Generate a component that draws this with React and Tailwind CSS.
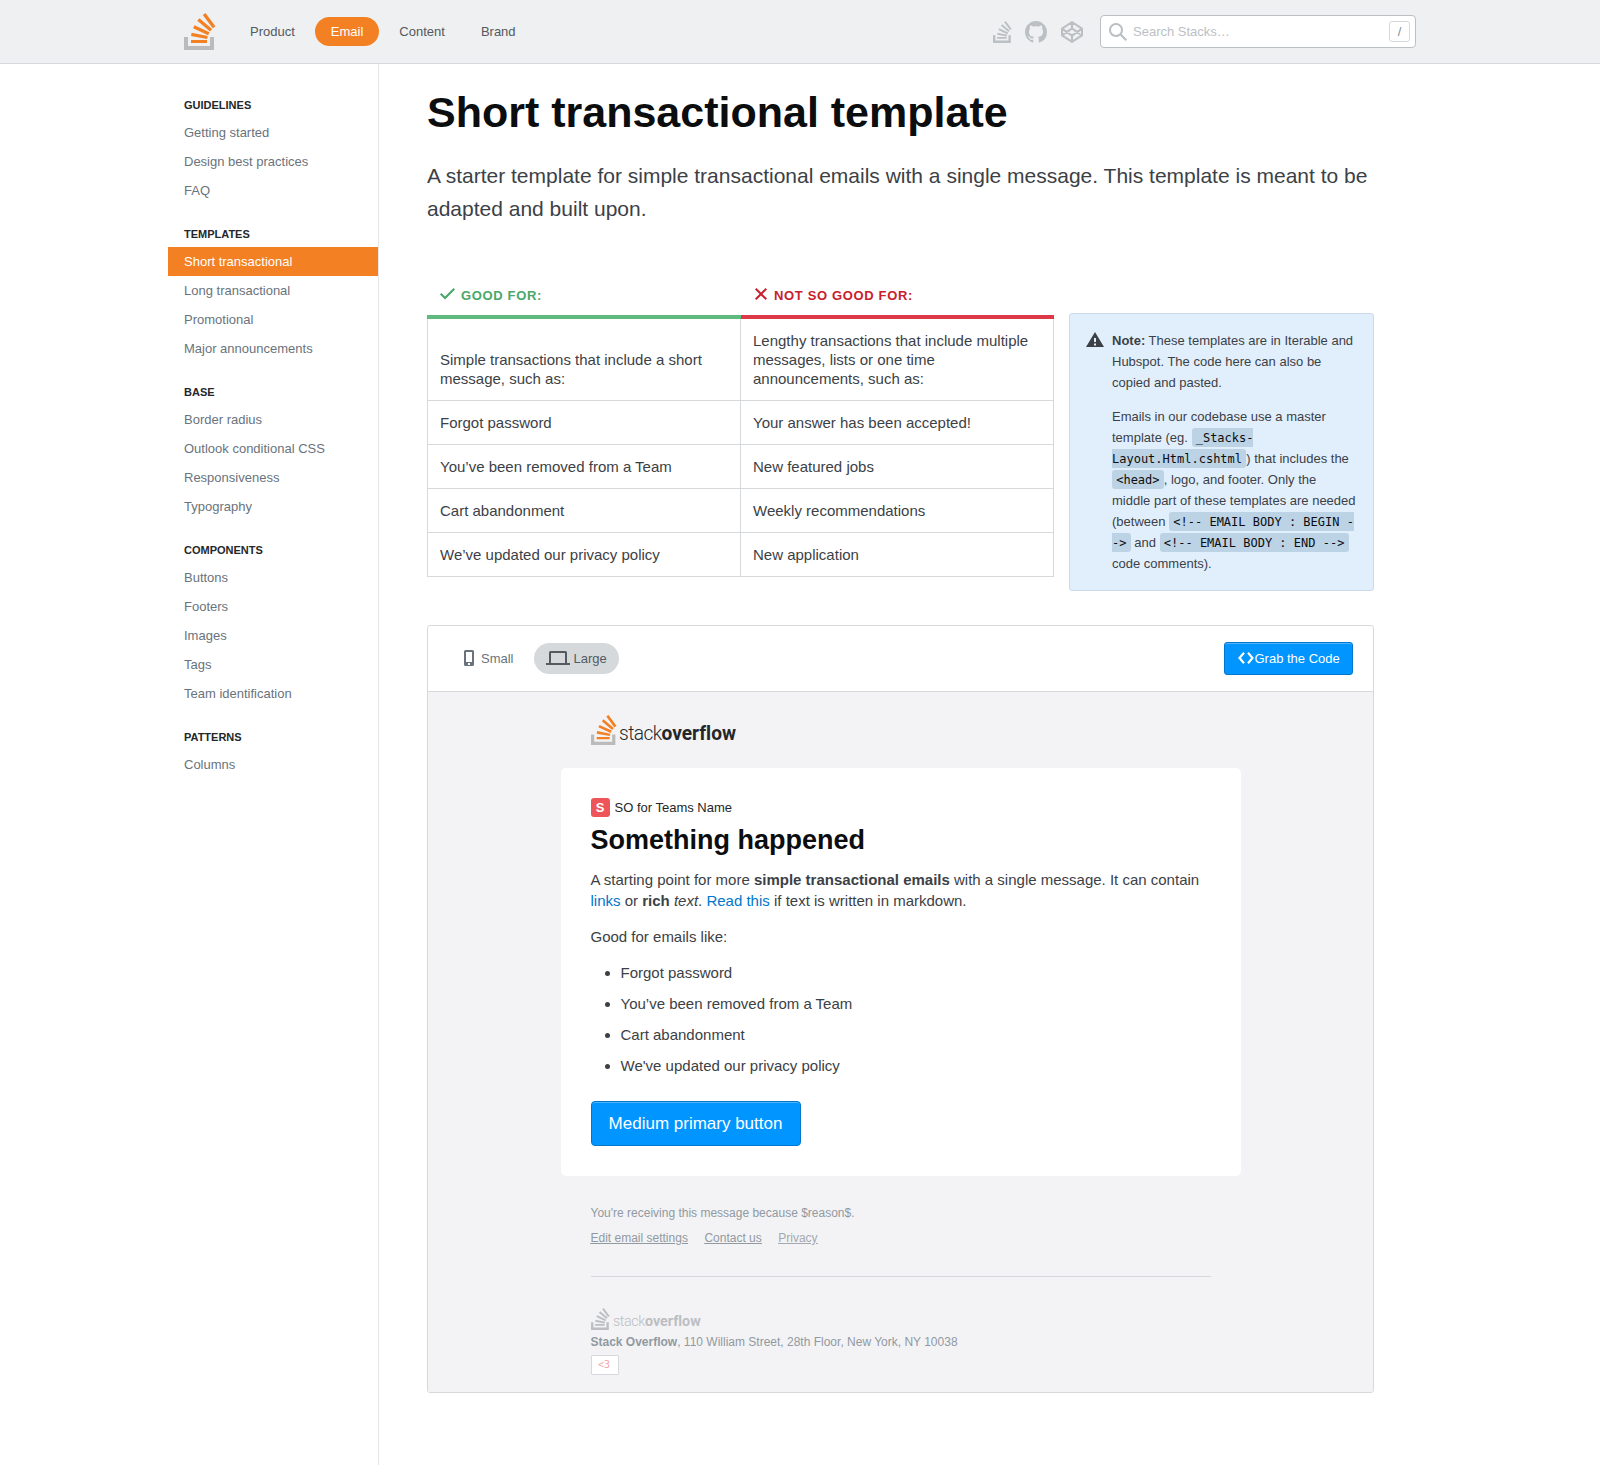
import React from "react";

const BARS =
  "M21.5 0l-2.7 2 9.9 13.3 2.7-2L21.5 0zM26 18.4L13.3 7.8l2.1-2.5 12.7 10.6-2.1 2.5zM9.1 15.2l15 7 1.4-3-15-7-1.4 3zm14 10.79l.68-2.95-16.1-3.35L7 23l16.1 2.99zM23 30H7v-3h16v3z";
const TRAY = "M26 33v-9h4v13H0V24h4v9h22z";

const StackMark = ({ className, bars = "#f48024", tray = "#bcbbbb" }) => (
  <svg className={className} viewBox="0 0 32 37" preserveAspectRatio="none">
    <path fill={tray} d={TRAY} />
    <path fill={bars} d={BARS} />
  </svg>
);

const Wordmark = ({ className, color }) => (
  <svg
    className={className}
    viewBox="0 -4 120 32"
    fill={color}
    fontFamily="Roboto, sans-serif"
    fontSize="20.5"
    style={{ fontVariantLigatures: "none" }}
  >
    <text x="0" y="20.5" textLength="117" lengthAdjust="spacingAndGlyphs">
      <tspan fontWeight="300" letterSpacing="-0.6">stack</tspan>
      <tspan fontWeight="700">overflow</tspan>
    </text>
  </svg>
);

const nav = ["Product", "Email", "Content", "Brand"];

const groups = [
  ["Guidelines", ["Getting started", "Design best practices", "FAQ"]],
  ["Templates", ["Short transactional", "Long transactional", "Promotional", "Major announcements"]],
  ["Base", ["Border radius", "Outlook conditional CSS", "Responsiveness", "Typography"]],
  ["Components", ["Buttons", "Footers", "Images", "Tags", "Team identification"]],
  ["Patterns", ["Columns"]],
];

const rows = [
  ["Forgot password", "Your answer has been accepted!"],
  ["You’ve been removed from a Team", "New featured jobs"],
  ["Cart abandonment", "Weekly recommendations"],
  ["We’ve updated our privacy policy", "New application"],
];

const bullets = ["Forgot password", "You’ve been removed from a Team", "Cart abandonment", "We've updated our privacy policy"];

const Code = ({ children }) => (
  <code className="rounded-[3px] bg-[#bcd3e6] px-[4.2px] py-[2.5px] align-[1px] font-['DejaVu_Sans_Mono',monospace] text-[12px] leading-none text-[#0c0d0e]">
    {children}
  </code>
);

function Header() {
  return (
    <header className="h-16 border-b border-[#d6d9dc] bg-[#eff0f1]">
      <div className="mx-auto flex h-[63px] w-[1264px] items-center px-4">
        <StackMark className="h-[37px] w-8 shrink-0" />
        <nav className="ml-[18px] flex gap-1">
          {nav.map((n) => (
            <a
              key={n}
              className={
                n === "Email"
                  ? "rounded-full bg-[#f48024] px-4 py-1.5 text-[13px] leading-[17px] text-white"
                  : "px-4 py-1.5 text-[13px] leading-[17px] text-[#535a60]"
              }
            >
              {n}
            </a>
          ))}
        </nav>
        <div className="ml-auto flex items-center text-[#bbc0c4]">
          <StackMark className="mr-[13px] h-[22px] w-[19px]" bars="#bbc0c4" tray="#bbc0c4" />
          <svg className="mr-[14px] h-[22px] w-[22px]" viewBox="0 0 16 16" fill="currentColor">
            <path d="M8 0C3.58 0 0 3.58 0 8c0 3.54 2.29 6.53 5.47 7.59.4.07.55-.17.55-.38 0-.19-.01-.82-.01-1.49-2.01.37-2.53-.49-2.69-.94-.09-.23-.48-.94-.82-1.13-.28-.15-.68-.52-.01-.53.63-.01 1.08.58 1.23.82.72 1.21 1.87.87 2.33.66.07-.52.28-.87.51-1.07-1.78-.2-3.64-.89-3.64-3.95 0-.87.31-1.59.82-2.15-.08-.2-.36-1.02.08-2.12 0 0 .67-.21 2.2.82.64-.18 1.32-.27 2-.27s1.36.09 2 .27c1.53-1.04 2.2-.82 2.2-.82.44 1.1.16 1.92.08 2.12.51.56.82 1.27.82 2.15 0 3.07-1.87 3.75-3.65 3.95.29.25.54.73.54 1.48 0 1.07-.01 1.93-.01 2.2 0 .21.15.46.55.38A8.01 8.01 0 0 0 16 8c0-4.42-3.58-8-8-8z" />
          </svg>
          <svg className="mr-[17px] h-[22px] w-[22px]" viewBox="0 0 22 22" fill="none" stroke="currentColor" strokeWidth="2.1" strokeLinejoin="round">
            <path d="M11 1.1L21 7.600v6.800L11 20.900 1 14.400V7.600zM11 1.100v6.200M11 14.700v6.200M1 7.600L11 14.700l10-7.100M1 14.400L11 7.300l10 7.100" />
          </svg>
          <div className="flex h-[33px] w-[316px] items-center rounded-[4px] border border-[#bbc0c4] bg-white pl-2 pr-[5px]">
            <svg className="h-[18px] w-[18px]" viewBox="0 0 18 18" fill="currentColor">
              <path d="M18 16.5l-5.14-5.18h-.35a7 7 0 10-1.19 1.19v.35L16.5 18l1.5-1.5zM12 7A5 5 0 112 7a5 5 0 0110 0z" />
            </svg>
            <span className="ml-1.5 text-[13px] leading-[17px] text-[#bbc0c4]">Search Stacks…</span>
            <span className="ml-auto flex h-[21px] w-[21px] items-center justify-center rounded-[3px] border border-[#d6d9dc] text-[13px] text-[#848d95]">
              /
            </span>
          </div>
        </div>
      </div>
    </header>
  );
}

function Sidebar() {
  return (
    <aside className="w-[211px] shrink-0 border-r border-[#e4e6e8] pt-[12px]">
      {groups.map(([title, items]) => (
        <section key={title}>
          <h2 className="px-4 pb-1.5 pt-[22px] text-[11px] font-bold uppercase leading-[14px] text-[#242729]">{title}</h2>
          {items.map((i) => (
            <a
              key={i}
              className={
                i === "Short transactional"
                  ? "block bg-[#f48024] px-4 py-1.5 text-[13px] leading-[17px] text-white"
                  : "block px-4 py-1.5 text-[13px] leading-[17px] text-[#6a737c]"
              }
            >
              {i}
            </a>
          ))}
        </section>
      ))}
    </aside>
  );
}

function Comparison() {
  return (
    <div className="grid w-[627px] grid-cols-[314px_313px] text-[15px] leading-[19px] text-[#3c4146]">
      <div className="flex h-[52px] items-center border-b-4 border-[#5eba7d] pl-3 pt-[6px] text-[#48a868]">
        <svg className="mr-1 h-[18px] w-[18px]" viewBox="0 0 18 18" fill="currentColor">
          <path d="M16 4.41L14.59 3 6 11.59 2.41 8 1 9.41l5 5z" />
        </svg>
        <span className="pt-[3px] text-[13px] font-bold leading-[17px] tracking-[0.65px]">GOOD FOR:</span>
      </div>
      <div className="flex h-[52px] items-center border-b-4 border-[#dc3848] pl-[11px] pt-[6px] text-[#c9202d]">
        <svg className="mr-1 h-[18px] w-[18px]" viewBox="0 0 18 18" fill="currentColor">
          <path d="M15 4.41L13.59 3 9 7.59 4.41 3 3 4.41 7.59 9 3 13.59 4.41 15 9 10.41 13.59 15 15 13.59 10.41 9z" />
        </svg>
        <span className="pt-[3px] text-[13px] font-bold leading-[17px] tracking-[0.65px]">NOT SO GOOD FOR:</span>
      </div>
      <div className="flex items-end border-x border-b border-[#d6d9dc] p-3">
        <p>
          Simple transactions that include a short
          <br />
          message, such as:
        </p>
      </div>
      <div className="border-b border-r border-[#d6d9dc] p-3">
        Lengthy transactions that include multiple
        <br />
        messages, lists or one time
        <br />
        announcements, such as:
      </div>
      {rows.map(([a, b]) => (
        <React.Fragment key={a}>
          <div className="border-x border-b border-[#d6d9dc] p-3">{a}</div>
          <div className="border-b border-r border-[#d6d9dc] p-3">{b}</div>
        </React.Fragment>
      ))}
    </div>
  );
}

function Note() {
  return (
    <div className="flex h-[278px] w-[305px] gap-2 whitespace-nowrap rounded-[3px] border border-[#cbdae7] bg-[#e1effd] p-4 text-[13px] leading-[21px] text-[#3c4146]">
      <svg className="h-[18px] w-[18px] shrink-0" viewBox="0 0 18 18" fill="currentColor">
        <path fillRule="evenodd" d="M9 2l9 15H0L9 2zM8 8v4h2V8H8zm0 5.500v2h2v-2H8z" />
      </svg>
      <div>
        <p>
          <b>Note:</b> These templates are in Iterable and
          <br />
          Hubspot. The code here can also be
          <br />
          copied and pasted.
        </p>
        <p className="mt-[13px]">
          Emails in our codebase use a master
          <br />
          template (eg.{" "}
          <Code>
            _Stacks-
            <br />
            Layout.Html.cshtml
          </Code>
          ) that includes the
          <br />
          <Code>&lt;head&gt;</Code>, logo, and footer. Only the
          <br />
          middle part of these templates are needed
          <br />
          (between{" "}
          <Code>
            &lt;!-- EMAIL BODY : BEGIN -
            <br />
            -&gt;
          </Code>{" "}
          and <Code>&lt;!-- EMAIL BODY : END --&gt;</Code>
          <br />
          code comments).
        </p>
      </div>
    </div>
  );
}

function Email() {
  return (
    <div className="h-[700px] bg-[#f3f3f5] pt-[23px]">
      <div className="mx-auto w-[680px]">
        <div className="flex h-[30px] items-start pl-[30px]">
          <StackMark className="h-[30px] w-[26px]" />
          <Wordmark className="ml-[2px] h-8 w-[120px]" color="#242729" />
        </div>
        <div className="mt-[23px] h-[408px] rounded-[5px] bg-white p-[30px] text-[15px] leading-[21px] text-[#3c4146]">
          <div className="flex items-center gap-[5px] text-[13px] leading-[19px] text-[#242729]">
            <span className="h-[19px] w-[19px] rounded-[3px] bg-[#ee5559] text-center font-bold text-white">S</span>
            SO for Teams Name
          </div>
          <h2 className="mt-[6px] text-[27px] font-bold leading-[35px] text-[#0c0d0e]">Something happened</h2>
          <p className="mt-[11px]">
            A starting point for more <b>simple transactional emails</b> with a single message. It can contain{" "}
            <a className="text-[#0077cc]">links</a> or <b>rich</b> <i>text</i>. <a className="text-[#0077cc]">Read this</a> if
            text is written in markdown.
          </p>
          <p className="mt-[15px]">Good for emails like:</p>
          <ul className="mt-[15px] flex flex-col gap-[10px]">
            {bullets.map((b) => (
              <li key={b} className="flex items-center pl-[14px]">
                <span className="mr-[11px] mt-px h-[5px] w-[5px] rounded-full bg-[#3c4146]" />
                {b}
              </li>
            ))}
          </ul>
          <a className="mt-[25px] flex h-[45px] w-[210px] items-center justify-center rounded-[4px] border border-[#0077cc] bg-[#0095ff] text-[17px] text-white shadow-[inset_0_1px_0_0_rgba(102,191,255,0.75)]">
            Medium primary button
          </a>
        </div>
        <div className="px-[30px] pt-[28px] text-[12px] leading-[18px] text-[#9199a1]">
          <p>You're receiving this message because $reason$.</p>
          <div className="mt-[7px] flex gap-[16.5px] underline">
            <a>Edit email settings</a>
            <a>Contact us</a>
            <a className="text-[#a3a9b0]">Privacy</a>
          </div>
          <div className="mt-[29px] border-t border-[#d6d9dc]" />
          <div className="mt-[31px] flex h-[22px] items-start">
            <StackMark className="h-[22px] w-[19px]" bars="#bcbec2" tray="#bcbec2" />
            <Wordmark className="ml-[3px] h-6 w-[90px]" color="#bcbec2" />
          </div>
          <p className="mt-[3px]">
            <b>Stack Overflow</b>, 110 William Street, 28th Floor, New York, NY 10038
          </p>
          <span className="mt-1 flex h-5 w-7 items-center justify-center rounded-[1px] border border-[#d6d9dc] bg-white pr-px font-['DejaVu_Sans_Mono',monospace] text-[10px] text-[#f4a6aa]">
            &lt;3
          </span>
        </div>
      </div>
    </div>
  );
}

function Preview() {
  return (
    <div className="mt-[34px] overflow-hidden rounded-[3px] border border-[#d6d9dc]">
      <div className="flex h-[66px] items-center border-b border-[#d6d9dc] pl-[36px] pr-5 text-[13px] leading-[17px]">
        <span className="flex items-center text-[#6a737c]">
          <svg className="-mt-px mr-[7px] h-4 w-[10px]" viewBox="0 0 10 16" fill="currentColor">
            <path fillRule="evenodd" d="M1.500 0h7A1.500 1.500 0 0110 1.500v13A1.500 1.500 0 018.500 16h-7A1.500 1.500 0 010 14.500v-13A1.500 1.500 0 011.500 0zM2 2v10h6V2H2zm2 11v2h2v-2H4z" />
          </svg>
          Small
        </span>
        <span className="ml-5 flex h-[31px] w-[85px] items-center rounded-full bg-[#d6d9dc] pl-3 text-[#535a60]">
          <svg className="-mt-px mr-[4px] h-[14px] w-6" viewBox="0 0 24 14" fill="currentColor">
            <path fillRule="evenodd" d="M4.500 0h15A1.500 1.500 0 0121 1.500V12h3v2H0v-2h3V1.500A1.500 1.500 0 014.500 0zM5 2v10h14V2H5z" />
          </svg>
          Large
        </span>
        <a className="ml-auto flex h-[33px] w-[129px] items-center rounded-[3px] border border-[#0077cc] bg-[#0095ff] pl-[12.5px] text-white shadow-[inset_0_1px_0_0_rgba(102,191,255,0.75)]">
          <svg className="-mt-px mr-px h-3 w-4" viewBox="0 0 16 12" fill="none" stroke="currentColor" strokeWidth="2.2">
            <path d="M6 .8L1.500 6 6 11.200M10 .8L14.500 6 10 11.200" />
          </svg>
          Grab the Code
        </a>
      </div>
      <Email />
    </div>
  );
}

export default function App() {
  return (
    <div className="flex h-[1465px] flex-col overflow-hidden bg-white font-['Liberation_Sans',Arial,sans-serif]">
      <Header />
      <div className="mx-auto flex w-[1264px] flex-1">
        <Sidebar />
        <main className="ml-12 w-[947px] pt-[20px]">
          <h1 className="text-[43px] font-bold leading-[56px] text-[#0c0d0e]">Short transactional template</h1>
          <p className="mt-[19px] text-[21px] leading-[33px] text-[#3c4146]">
            A starter template for simple transactional emails with a single message. This template is meant to be adapted and
            built upon.
          </p>
          <div className="mt-[42px] flex h-[324px] items-end justify-between">
            <div className="self-start">
              <Comparison />
            </div>
            <Note />
          </div>
          <Preview />
        </main>
      </div>
    </div>
  );
}
